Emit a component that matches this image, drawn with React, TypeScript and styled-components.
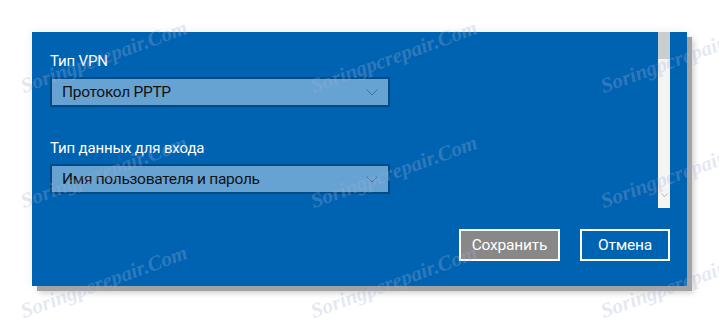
import styled, { createGlobalStyle } from "styled-components";

const GlobalStyle = createGlobalStyle`
    html, body {
        margin: 0;
        padding: 0;
        background: #ffffff;
    }

    body {
        font-family: Roboto, "Open Sans", sans-serif;
        overflow: hidden;
    }
`;

const Page = styled.div`
    position: relative;
    width: 719px;
    height: 321px;
    padding: 32px 0 0 32px;
    box-sizing: border-box;
    overflow: hidden;
`;

const Dialog = styled.div`
    width: 655px;
    height: 254px;
    background: #0063b1;
    display: flex;
    flex-direction: column;
    padding-right: 17px;
    box-sizing: border-box;
    box-shadow: 5px 5px 0 #a3a3a3, 7px 7px 6px rgba(0, 0, 0, 0.18), 0 0 10px rgba(0, 0, 0, 0.08);
`;

const Body = styled.div`
    display: grid;
    grid-template-columns: 1fr 12px;
    height: 176px;
`;

const Content = styled.div`
    padding: 19px 0 0 18px;
    display: flex;
    flex-direction: column;
`;

const Field = styled.div<{ $gap?: number }>`
    display: flex;
    flex-direction: column;
    gap: 6px;
    margin-bottom: ${(p) => p.$gap ?? 0}px;
`;

const Label = styled.div`
    color: #ffffff;
    font-size: 15px;
    line-height: 20px;
    letter-spacing: -0.15px;
`;

const Select = styled.div`
    width: 340px;
    height: 30px;
    box-sizing: border-box;
    border: 2px solid #004a86;
    background: #66a3d2;
    display: flex;
    align-items: center;
    justify-content: space-between;
    padding: 0 10px 0 10px;
    color: #111111;
    font-size: 15.5px;
    letter-spacing: -0.3px;
`;

const Chevron = ({ size = 12, color = "#3d6f9a" }: { size?: number; color?: string }) => (
    <svg width={size} height={size / 2 + 1} viewBox="0 0 12 7" fill="none">
        <path d="M0.5 0.5 L6 6 L11.5 0.5" stroke={color} strokeWidth="1" />
    </svg>
);

const Scrollbar = styled.div`
    display: flex;
    flex-direction: column;
    background: #f4f4f4;
`;

const Thumb = styled.div`
    height: 27px;
    background: #c8cdd2;
`;

const Track = styled.div`
    flex: 1;
    display: flex;
    align-items: flex-end;
    justify-content: center;
    padding-bottom: 11px;
`;

const Footer = styled.div`
    display: flex;
    justify-content: flex-end;
    gap: 20px;
    padding: 21px 0 25px;
`;

const Button = styled.button<{ $primary?: boolean; $width: number }>`
    width: ${(p) => p.$width}px;
    height: 32px;
    box-sizing: border-box;
    border: 2px solid #ffffff;
    background: ${(p) => (p.$primary ? "#888888" : "#0063b1")};
    color: #ffffff;
    font-family: Roboto, "Open Sans", sans-serif;
    font-size: 15.5px;
    letter-spacing: -0.2px;
    padding: 0;
    cursor: pointer;
`;

const Watermark = styled.div<{ $x: number; $y: number }>`
    position: absolute;
    left: ${(p) => p.$x}px;
    top: ${(p) => p.$y - 22}px;
    transform-origin: 0 100%;
    transform: rotate(-20deg);
    font-family: "Liberation Serif", serif;
    font-style: italic;
    font-weight: bold;
    font-size: 21px;
    line-height: 22px;
    white-space: nowrap;
    color: rgba(165, 175, 215, 0.3);
    pointer-events: none;
`;

const marks = [
    [25, 97], [315, 97], [605, 97],
    [25, 212], [315, 212], [605, 212],
    [25, 322], [315, 322], [605, 322],
];

const App = () => {
    return (
        <>
            <GlobalStyle/>
            <Page>
                <Dialog>
                    <Body>
                        <Content>
                            <Field $gap={31}>
                                <Label>Тип VPN</Label>
                                <Select>
                                    Протокол PPTP
                                    <Chevron/>
                                </Select>
                            </Field>
                            <Field>
                                <Label>Тип данных для входа</Label>
                                <Select>
                                    Имя пользователя и пароль
                                    <Chevron/>
                                </Select>
                            </Field>
                        </Content>
                        <Scrollbar>
                            <Thumb/>
                            <Track>
                                <Chevron size={7} color="#8a8a8a"/>
                            </Track>
                        </Scrollbar>
                    </Body>
                    <Footer>
                        <Button $primary $width={101}>Сохранить</Button>
                        <Button $width={90}>Отмена</Button>
                    </Footer>
                </Dialog>
                {marks.map(([x, y]) => (
                    <Watermark key={`${x}-${y}`} $x={x} $y={y}>Soringpcrepair.Com</Watermark>
                ))}
            </Page>
        </>
    );
};

export default App;
